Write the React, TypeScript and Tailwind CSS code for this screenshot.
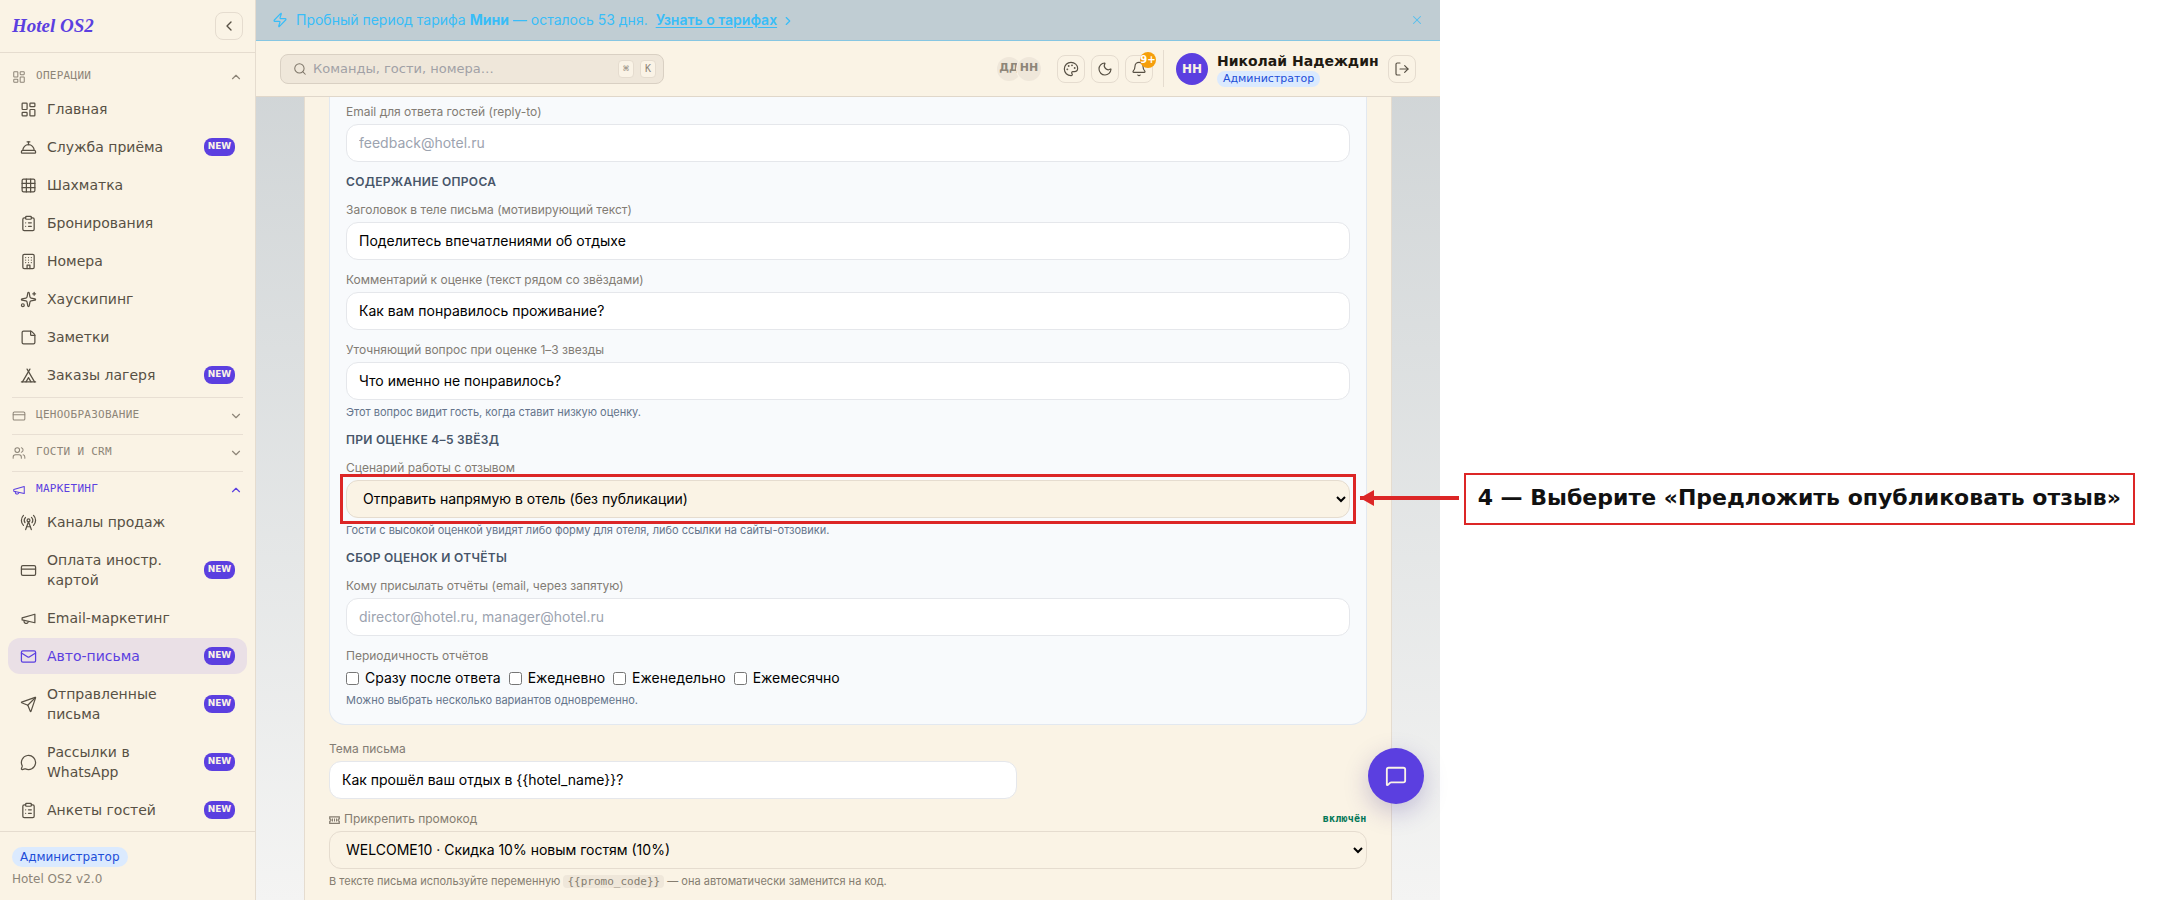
import type { ReactNode } from "react";
import {
  Bell,
  ChevronDown,
  ChevronLeft,
  ChevronRight,
  ChevronUp,
  ClipboardList,
  ConciergeBell,
  CreditCard,
  Grid3x3,
  LayoutDashboard,
  LogOut,
  Mail,
  MessageCircle,
  MessageSquare,
  Moon,
  Palette,
  RadioTower,
  Search,
  Send,
  Sparkles,
  StickyNote,
  Users,
  X,
  Zap,
} from "lucide-react";

type IconProps = { size?: number | string; strokeWidth?: number | string; className?: string };
type IconType = React.ComponentType<IconProps>;
type NavItem = { label: string; icon: IconType; isNew?: boolean; active?: boolean };

function StrokeIcon({ size = 17, strokeWidth = 1.75, className, children }: IconProps & { children: ReactNode }) {
  return (
    <svg width={size} height={size} viewBox="0 0 24 24" fill="none" stroke="currentColor" strokeWidth={strokeWidth} strokeLinecap="round" strokeLinejoin="round" className={className} aria-hidden="true">
      {children}
    </svg>
  );
}

function BuildingIcon(props: IconProps) {
  return (
    <StrokeIcon {...props}>
      <rect x="4" y="2" width="16" height="20" rx="2" />
      <path d="M10 22v-5h4v5" />
      <path d="M8 6.5h.01M12 6.5h.01M16 6.5h.01M8 10h.01M12 10h.01M16 10h.01M8 13.5h.01M12 13.5h.01M16 13.5h.01" />
    </StrokeIcon>
  );
}

function CampIcon(props: IconProps) {
  return (
    <StrokeIcon {...props}>
      <path d="M3.5 21 14 3" />
      <path d="M20.5 21 10 3" />
      <path d="M15.5 21 12 15l-3.5 6" />
      <path d="M2 21h20" />
    </StrokeIcon>
  );
}

function MegaphoneIcon(props: IconProps) {
  return (
    <StrokeIcon {...props}>
      <path d="m3 11 18-5v12L3 14v-3z" />
      <path d="M11.6 16.8a3 3 0 1 1-5.8-1.6" />
    </StrokeIcon>
  );
}

function TicketIcon() {
  return (
    <svg width="11" height="8" viewBox="0 0 11 8" fill="none" stroke="currentColor" className="mr-1 inline" aria-hidden="true">
      <path d="M.75.75h9.5v2a1.25 1.25 0 0 0 0 2.5v2H.75v-2a1.25 1.25 0 0 0 0-2.5z" strokeWidth="1.25" />
      <path d="M3.5 2.5v3M5.5 2.5v3M7.5 2.5v3" strokeWidth="1" />
    </svg>
  );
}

const operations: NavItem[] = [
  { label: "Главная", icon: LayoutDashboard },
  { label: "Служба приёма", icon: ConciergeBell, isNew: true },
  { label: "Шахматка", icon: Grid3x3 },
  { label: "Бронирования", icon: ClipboardList },
  { label: "Номера", icon: BuildingIcon },
  { label: "Хаускипинг", icon: Sparkles },
  { label: "Заметки", icon: StickyNote },
  { label: "Заказы лагеря", icon: CampIcon, isNew: true },
];

const marketing: NavItem[] = [
  { label: "Каналы продаж", icon: RadioTower },
  { label: "Оплата иностр. картой", icon: CreditCard, isNew: true },
  { label: "Email-маркетинг", icon: MegaphoneIcon },
  { label: "Авто-письма", icon: Mail, isNew: true, active: true },
  { label: "Отправленные письма", icon: Send, isNew: true },
  { label: "Рассылки в WhatsApp", icon: MessageCircle, isNew: true },
  { label: "Анкеты гостей", icon: ClipboardList, isNew: true },
];

function NavSection({ title, icon: Icon, items, active, first }: { title: string; icon: IconType; items?: NavItem[]; active?: boolean; first?: boolean }) {
  const Chevron = items ? ChevronUp : ChevronDown;
  return (
    <section className="pb-1">
      {!first && <hr className="mx-3 mb-[2px] border-[#e8dfd3]" />}
      <button
        type="button"
        className={
          active
            ? "flex h-[30px] w-full items-center gap-[10px] px-3 pt-px font-['DejaVu_Sans_Mono',monospace] text-[11px] tracking-wide text-[#5b3fe0]"
            : "flex h-[30px] w-full items-center gap-[10px] px-3 pt-px font-['DejaVu_Sans_Mono',monospace] text-[11px] tracking-wide text-[#8d8578]"
        }
      >
        <Icon size={14} strokeWidth={1.75} />
        <span className="flex-1 text-left">{title}</span>
        <Chevron size={14} strokeWidth={2} />
      </button>
      {items && (
        <ul className="flex flex-col gap-[2px] px-2">
          {items.map((item) => (
            <li key={item.label}>
              <a
                href="#"
                className={
                  item.active
                    ? "flex items-center gap-[10px] rounded-xl bg-[#eae0e6] px-3 py-2 text-sm text-[#5b3fe0]"
                    : "flex items-center gap-[10px] rounded-xl px-3 py-2 text-sm text-[#575044]"
                }
              >
                <item.icon size={17} strokeWidth={1.75} className="shrink-0" />
                <span className="flex-1">{item.label}</span>
                {item.isNew && (
                  <span className="w-[31px] rounded-lg bg-[#5b3fe0] pt-px pb-[3px] text-center text-[9px] leading-[14px] font-bold text-[#faf3e6]">NEW</span>
                )}
              </a>
            </li>
          ))}
        </ul>
      )}
    </section>
  );
}

function Sidebar() {
  return (
    <aside className="flex w-64 shrink-0 flex-col border-r border-[#e5dccf] bg-[#faf3e5]">
      <div className="flex h-[53px] shrink-0 items-center justify-between border-b border-[#e5dccf] px-3">
        <span className="font-['Liberation_Serif',serif] text-[19px] font-bold text-[#5b3fe0] italic">Hotel OS2</span>
        <button type="button" aria-label="Свернуть меню" className="flex size-7 items-center justify-center rounded-lg border border-[#e5dccf] text-[#575044]">
          <ChevronLeft size={16} />
        </button>
      </div>
      <nav className="min-h-0 flex-1 overflow-hidden pt-2">
        <NavSection title="ОПЕРАЦИИ" icon={LayoutDashboard} items={operations} first />
        <NavSection title="ЦЕНООБРАЗОВАНИЕ" icon={CreditCard} />
        <NavSection title="ГОСТИ И CRM" icon={Users} />
        <NavSection title="МАРКЕТИНГ" icon={MegaphoneIcon} items={marketing} active />
      </nav>
      <div className="flex shrink-0 flex-col items-start gap-1 border-t border-[#e5dccf] px-3 pt-[15px] pb-[13px] text-xs">
        <span className="rounded-full bg-[#dbeafe] px-2 py-[2px] text-[#1d4ed8]">Администратор</span>
        <span className="text-[#8d8578]">Hotel OS2 v2.0</span>
      </div>
    </aside>
  );
}

function Banner() {
  return (
    <div className="flex h-[41px] shrink-0 items-center border-b border-[#86c6e2] bg-[#c0cdd3] px-4 font-[Inter,sans-serif] text-sm text-[#38bdf8]">
      <Zap size={16} strokeWidth={1.75} />
      <p className="ml-2 flex-1">
        Пробный период тарифа <strong>Мини</strong> — осталось 53 дня.
        <a href="#" className="ml-2 font-semibold underline underline-offset-2">
          Узнать о тарифах
        </a>
        <ChevronRight size={14} className="ml-1 inline" />
      </p>
      <button type="button" aria-label="Закрыть" className="opacity-80">
        <X size={14} strokeWidth={1.75} />
      </button>
    </div>
  );
}

function IconButton({ label, children }: { label: string; children: ReactNode }) {
  return (
    <button type="button" aria-label={label} className="relative flex size-7 shrink-0 items-center justify-center rounded-lg border border-[#e5dccf] text-[#575044]">
      {children}
    </button>
  );
}

function Header() {
  return (
    <header className="flex h-14 shrink-0 items-center border-b border-[#e0d7ca] bg-[#faf3e5] px-6">
      <div className="flex h-[30px] w-full max-w-[384px] items-center rounded-lg border border-[#d9d0c3] bg-[#efe7da] pr-[7px] pl-3">
        <Search size={14} strokeWidth={1.75} className="shrink-0 text-[#7d7568]" />
        <input
          type="text"
          aria-label="Поиск"
          placeholder="Команды, гости, номера…"
          className="ml-[6px] min-w-0 flex-1 bg-transparent text-[13px] outline-none placeholder:text-[#a1a1a6]"
        />
        <kbd className="flex h-[18px] w-4 items-center justify-center rounded border border-[#e5dccf] bg-[#faf3e6] font-['DejaVu_Sans_Mono',monospace] text-[10px] text-[#8d8578]">⌘</kbd>
        <kbd className="ml-[6px] flex h-[18px] w-4 items-center justify-center rounded border border-[#e5dccf] bg-[#faf3e6] font-['DejaVu_Sans_Mono',monospace] text-[10px] text-[#8d8578]">K</kbd>
      </div>
      <div className="ml-auto flex shrink-0 items-center">
        <div className="mr-4 flex text-[11px] font-bold text-[#8d8578]">
          <span className="flex size-6 items-center justify-center rounded-full bg-[#efe7da]">ДД</span>
          <span className="-ml-1 flex size-6 items-center justify-center rounded-full bg-[#efe7da] ring-1 ring-[#faf3e6]">НН</span>
        </div>
        <div className="flex gap-[6px]">
          <IconButton label="Тема оформления">
            <Palette size={16} strokeWidth={1.75} />
          </IconButton>
          <IconButton label="Тёмная тема">
            <Moon size={16} strokeWidth={1.75} />
          </IconButton>
          <IconButton label="Уведомления">
            <Bell size={16} strokeWidth={1.75} />
            <span className="absolute -top-1 -right-1 flex size-4 items-center justify-center rounded-full bg-[#f59e0b] text-[10px] font-bold text-white">9+</span>
          </IconButton>
        </div>
        <div className="ml-[10px] flex h-[37px] items-center border-l border-[#e5dccf] pl-3">
          <span className="flex size-8 items-center justify-center rounded-full bg-[#5b3fe0] text-xs font-bold text-[#faf3e6]">НН</span>
          <div className="mr-[9px] ml-[9px] flex flex-col items-start">
            <span className="text-sm leading-5 font-bold text-[#1f1a12]">Николай Надеждин</span>
            <span className="rounded-full bg-[#dbeafe] px-[6px] text-[11px] leading-4 text-[#1d4ed8]">Администратор</span>
          </div>
          <IconButton label="Выйти">
            <LogOut size={16} strokeWidth={1.75} />
          </IconButton>
        </div>
      </div>
    </header>
  );
}

const inputClass = "block h-[38px] w-full rounded-xl border border-[#e5e7eb] bg-white px-3 pb-[2px] text-sm text-black outline-none placeholder:text-[#9ca3af]";
const selectClass = "block h-[38px] w-full rounded-xl border border-[#e5dccf] bg-[#faf3e5] px-3 pb-[2px] text-sm text-black outline-none";

function Field({ id, label, hint, children }: { id: string; label: string; hint?: string; children: ReactNode }) {
  return (
    <div>
      <label htmlFor={id} className="mb-1 block text-xs text-[#827c74]">
        {label}
      </label>
      {children}
      {hint && <p className="mt-1 text-[11px] leading-4 text-[#64748b]">{hint}</p>}
    </div>
  );
}

function GroupTitle({ children }: { children: ReactNode }) {
  return <h3 className="text-xs font-semibold tracking-wide text-[#475569]">{children}</h3>;
}

const periods = ["Сразу после ответа", "Ежедневно", "Еженедельно", "Ежемесячно"];

function SurveyForm() {
  return (
    <form className="min-h-full border-x border-[#e5dccf] bg-[#faf3e5] px-6 font-[Inter,sans-serif] [text-rendering:optimizeSpeed]">
      <div className="flex flex-col gap-3 rounded-b-2xl border-x border-b border-[#e2e8f0] bg-[#f8fafc] px-4 pt-[7px] pb-4">
        <Field id="reply" label="Email для ответа гостей (reply-to)">
          <input id="reply" type="email" placeholder="feedback@hotel.ru" className={inputClass} />
        </Field>
        <GroupTitle>СОДЕРЖАНИЕ ОПРОСА</GroupTitle>
        <Field id="title" label="Заголовок в теле письма (мотивирующий текст)">
          <input id="title" type="text" defaultValue="Поделитесь впечатлениями об отдыхе" className={inputClass} />
        </Field>
        <Field id="comment" label="Комментарий к оценке (текст рядом со звёздами)">
          <input id="comment" type="text" defaultValue="Как вам понравилось проживание?" className={inputClass} />
        </Field>
        <Field id="question" label="Уточняющий вопрос при оценке 1–3 звезды" hint="Этот вопрос видит гость, когда ставит низкую оценку.">
          <input id="question" type="text" defaultValue="Что именно не понравилось?" className={inputClass} />
        </Field>
        <GroupTitle>ПРИ ОЦЕНКЕ 4–5 ЗВЁЗД</GroupTitle>
        <Field id="scenario" label="Сценарий работы с отзывом" hint="Гости с высокой оценкой увидят либо форму для отеля, либо ссылки на сайты-отзовики.">
          <div className="relative">
            <select id="scenario" className={selectClass}>
              <option>Отправить напрямую в отель (без публикации)</option>
              <option>Предложить опубликовать отзыв</option>
            </select>
            <div className="pointer-events-none absolute -inset-[6px] border-3 border-[#dc2626]" />
          </div>
        </Field>
        <GroupTitle>СБОР ОЦЕНОК И ОТЧЁТЫ</GroupTitle>
        <Field id="reports" label="Кому присылать отчёты (email, через запятую)">
          <input id="reports" type="text" placeholder="director@hotel.ru, manager@hotel.ru" className={inputClass} />
        </Field>
        <fieldset>
          <legend className="mb-1 text-xs text-[#827c74]">Периодичность отчётов</legend>
          <div className="flex gap-2 text-sm text-black">
            {periods.map((period) => (
              <label key={period} className="flex items-center gap-[6px]">
                <input type="checkbox" className="size-[13px]" />
                {period}
              </label>
            ))}
          </div>
          <p className="mt-1 text-[11px] leading-4 text-[#64748b]">Можно выбрать несколько вариантов одновременно.</p>
        </fieldset>
      </div>
      <div className="flex flex-col gap-3 pt-4 pb-6">
        <Field id="subject" label="Тема письма">
          <div className="max-w-[688px]">
            <input id="subject" type="text" defaultValue="Как прошёл ваш отдых в {{hotel_name}}?" className={inputClass} />
          </div>
        </Field>
        <div>
          <div className="mb-1 flex items-center justify-between">
            <label htmlFor="promo" className="text-xs text-[#857d70]">
              <TicketIcon />
              Прикрепить промокод
            </label>
            <span className="font-['DejaVu_Sans_Mono',monospace] text-[10px] leading-4 font-bold tracking-wide text-[#047857]">включён</span>
          </div>
          <select id="promo" className={selectClass}>
            <option>WELCOME10 · Скидка 10% новым гостям (10%)</option>
          </select>
          <p className="mt-1 text-[11px] leading-4 text-[#857d70]">
            В тексте письма используйте переменную{" "}
            <code className="rounded bg-[#efe7da] px-1 font-['DejaVu_Sans_Mono',monospace]">{"{{promo_code}}"}</code> — она автоматически заменится на код.
          </p>
        </div>
      </div>
    </form>
  );
}

function Callout() {
  return (
    <aside className="shrink-0 px-6 pt-[473px]">
      <div className="relative border-2 border-[#dc2626] px-3 pt-[7px] pb-[9px] text-[22px] leading-8 font-bold whitespace-nowrap text-[#111111]">
        4 — Выберите «Предложить опубликовать отзыв»
        <svg width="99" height="18" viewBox="0 0 99 18" className="absolute top-[14px] right-full z-10 mr-[7px]" aria-hidden="true">
          <path d="M14 1v16L0 9z" fill="#dc2626" />
          <path d="M0 9h99" stroke="#dc2626" strokeWidth="4" />
        </svg>
      </div>
    </aside>
  );
}

export default function App() {
  return (
    <div className="flex h-screen overflow-hidden bg-white font-['DejaVu_Sans',sans-serif]">
      <div className="relative flex min-w-0 flex-1 bg-linear-to-b from-[#cdd2d4] to-[#f4f4f3]">
        <Sidebar />
        <div className="flex min-w-0 flex-1 flex-col">
          <Banner />
          <Header />
          <main className="min-h-0 flex-1 overflow-hidden px-12">
            <SurveyForm />
          </main>
        </div>
        <button type="button" aria-label="Открыть чат" className="absolute right-4 bottom-24 flex size-14 items-center justify-center rounded-full bg-[#5b3fe0] text-[#faf3e6] shadow-[0_8px_24px_rgba(60,40,140,0.25)]">
          <MessageSquare size={22} strokeWidth={2} />
        </button>
      </div>
      <Callout />
    </div>
  );
}
